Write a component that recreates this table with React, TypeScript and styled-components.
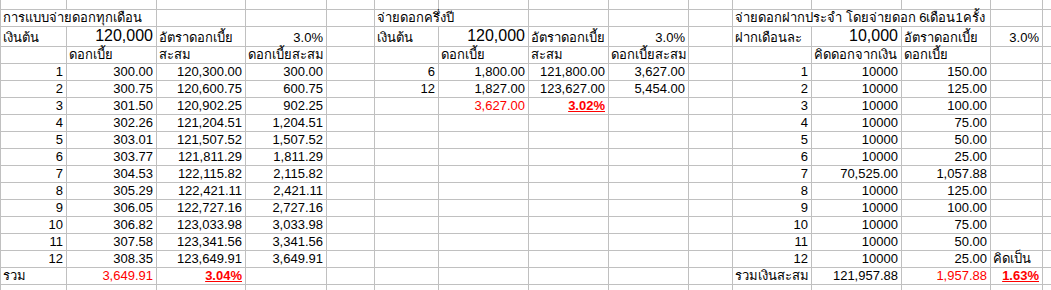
import React from "react";
import styled, { createGlobalStyle } from "styled-components";

const GlobalStyle = createGlobalStyle`
  html, body {
    margin: 0;
    padding: 0;
    background: #ffffff;
  }
`;

// column widths measured between grid lines (right border included)
const COLS = [66, 90, 89, 81, 48, 64, 90, 80, 80, 44, 79, 90, 89, 52, 9];
const ROWS = [10, 17, 20, 17, 17, 17, 17, 17, 17, 17, 17, 17, 17, 17, 17, 17, 17, 6];

type Spec =
  | null
  | string
  | {
      t: string;
      a?: "l" | "r";
      red?: boolean;
      b?: boolean;
      u?: boolean;
      big?: boolean;
      span?: number;
    };

const Sheet = styled.div`
  display: grid;
  grid-template-columns: ${COLS.map((c) => c + "px").join(" ")};
  grid-template-rows: ${ROWS.map((r) => r + "px").join(" ")};
  width: 1051px;
  height: 290px;
  overflow: hidden;
  border-left: 1px solid #c0c0c0;
  box-sizing: border-box;
  font-family: "Liberation Sans", Arial, "Noto Sans", sans-serif;
  color: #000;
`;

const Cell = styled.div<{
  $right: boolean;
  $red?: boolean;
  $bold?: boolean;
  $under?: boolean;
  $big?: boolean;
  $span: number;
}>`
  grid-column: span ${(p) => p.$span};
  box-sizing: border-box;
  border-right: 1px solid #c0c0c0;
  border-bottom: 1px solid #c0c0c0;
  display: flex;
  align-items: flex-end;
  justify-content: ${(p) => (p.$right ? "flex-end" : "flex-start")};
  padding: 0 ${(p) => (p.$right ? "3px" : "0")} 1px ${(p) => (p.$right ? "0" : "2px")};
  font-size: ${(p) => (p.$big ? "16px" : "13px")};
  line-height: ${(p) => (p.$big ? "18px" : "15px")};
  color: ${(p) => (p.$red ? "#ff0000" : "#000")};
  font-weight: ${(p) => (p.$bold ? 700 : 400)};
  text-decoration: ${(p) => (p.$under ? "underline" : "none")};
  white-space: nowrap;
  overflow: visible;
`;

const blank = (n: number): Spec[] => Array(n).fill(null);

const monthly = [
  ["300.00", "120,300.00", "300.00"],
  ["300.75", "120,600.75", "600.75"],
  ["301.50", "120,902.25", "902.25"],
  ["302.26", "121,204.51", "1,204.51"],
  ["303.01", "121,507.52", "1,507.52"],
  ["303.77", "121,811.29", "1,811.29"],
  ["304.53", "122,115.82", "2,115.82"],
  ["305.29", "122,421.11", "2,421.11"],
  ["306.05", "122,727.16", "2,727.16"],
  ["306.82", "123,033.98", "3,033.98"],
  ["307.58", "123,341.56", "3,341.56"],
  ["308.35", "123,649.91", "3,649.91"],
];

const halfYear: Spec[][] = [
  ["6", "1,800.00", "121,800.00", "3,627.00"],
  ["12", "1,827.00", "123,627.00", "5,454.00"],
  [null, { t: "3,627.00", red: true }, { t: "3.02%", red: true, b: true, u: true }, null],
];

const deposit = [
  ["10000", "150.00"],
  ["10000", "125.00"],
  ["10000", "100.00"],
  ["10000", "75.00"],
  ["10000", "50.00"],
  ["10000", "25.00"],
  ["70,525.00", "1,057.88"],
  ["10000", "125.00"],
  ["10000", "100.00"],
  ["10000", "75.00"],
  ["10000", "50.00"],
  ["10000", "25.00"],
];

const rows: Spec[][] = [
  blank(15),
  [
    { t: "การแบบจ่ายดอกทุกเดือน", span: 2 },
    null,
    null,
    null,
    { t: "จ่ายดอกครึ่งปี", span: 2 },
    null,
    null,
    null,
    { t: "จ่ายดอกฝากประจำ โดยจ่ายดอก 6เดือน1ครั้ง", span: 3 },
    null,
    null,
  ],
  [
    "เงินต้น",
    { t: "120,000", big: true },
    "อัตราดอกเบี้ย",
    "3.0%",
    null,
    "เงินต้น",
    { t: "120,000", big: true },
    "อัตราดอกเบี้ย",
    "3.0%",
    null,
    "ฝากเดือนละ",
    { t: "10,000", big: true },
    "อัตราดอกเบี้ย",
    "3.0%",
    null,
  ],
  [
    null,
    "ดอกเบี้ย",
    "สะสม",
    "ดอกเบี้ยสะสม",
    null,
    null,
    "ดอกเบี้ย",
    "สะสม",
    "ดอกเบี้ยสะสม",
    null,
    null,
    "คิดดอกจากเงิน",
    "ดอกเบี้ย",
    null,
    null,
  ],
  ...monthly.map((m, i): Spec[] => {
    const mid = halfYear[i] ?? [null, null, null, null];
    return [
      String(i + 1),
      ...m,
      null,
      ...mid,
      null,
      String(i + 1),
      ...deposit[i],
      i === 11 ? { t: "คิดเป็น", a: "l" } : null,
      null,
    ];
  }),
  [
    "รวม",
    { t: "3,649.91", red: true },
    { t: "3.04%", red: true, b: true, u: true },
    null,
    null,
    null,
    null,
    null,
    null,
    null,
    "รวมเงินสะสม",
    "121,957.88",
    { t: "1,957.88", red: true },
    { t: "1.63%", red: true, b: true, u: true },
    null,
  ],
  blank(15),
];

const isNumeric = (s: string) => /^[\d,.%]+$/.test(s);

const App: React.FC = () => {
  return (
    <>
      <GlobalStyle />
      <Sheet>
        {rows.map((row, ri) =>
          row.map((spec, ci) => {
            const key = `${ri}-${ci}`;
            if (spec === null) return <Cell key={key} $right={false} $span={1} />;
            const s = typeof spec === "string" ? { t: spec } : spec;
            const right = s.a ? s.a === "r" : isNumeric(s.t);
            return (
              <Cell
                key={key}
                $right={right}
                $red={s.red}
                $bold={s.b}
                $under={s.u}
                $big={s.big}
                $span={s.span ?? 1}
              >
                {s.t}
              </Cell>
            );
          })
        )}
      </Sheet>
    </>
  );
};

export default App;
